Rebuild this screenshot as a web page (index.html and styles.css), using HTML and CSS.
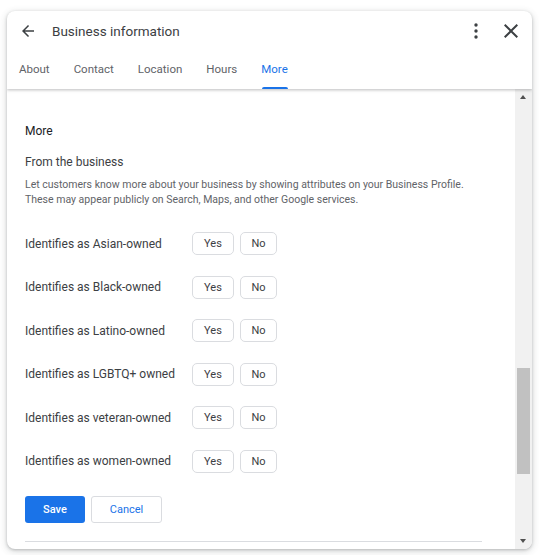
FILE: index.html
```html
<!DOCTYPE html>
<html>
<head>
<meta charset="utf-8">
<link rel="stylesheet" href="styles.css">
</head>
<body>
<div class="dialog">
  <div class="top">
    <div class="header">
      <svg class="ico back" width="24" height="24" viewBox="0 0 24 24"><path d="M20 11H7.83l5.59-5.59L12 4l-8 8 8 8 1.41-1.41L7.83 13H20v-2z" fill="#3c4043"/></svg>
      <div class="title">Business information</div>
      <svg class="ico kebab" width="24" height="24" viewBox="0 0 24 24"><circle cx="12" cy="6" r="1.7" fill="#3c4043"/><circle cx="12" cy="12" r="1.7" fill="#3c4043"/><circle cx="12" cy="18" r="1.7" fill="#3c4043"/></svg>
      <svg class="ico close" width="24" height="24" viewBox="0 0 24 24"><path d="M19 6.41L17.59 5 12 10.59 6.41 5 5 6.41 10.59 12 5 17.59 6.41 19 12 13.41 17.59 19 19 17.59 13.41 12z" fill="#3c4043"/></svg>
    </div>
    <div class="tabs">
      <div class="tab">About</div>
      <div class="tab">Contact</div>
      <div class="tab">Location</div>
      <div class="tab">Hours</div>
      <div class="tab active">More</div>
    </div>
  </div>
  <div class="body">
    <div class="content">
      <div class="h">More</div>
      <div class="sub">From the business</div>
      <div class="desc">Let customers know more about your business by showing attributes on your Business Profile. These may appear publicly on Search, Maps, and other Google services.</div>
      <div class="rows">
        <div class="row"><span class="label">Identifies as Asian-owned</span><button class="chip yes">Yes</button><button class="chip no">No</button></div>
        <div class="row"><span class="label">Identifies as Black-owned</span><button class="chip yes">Yes</button><button class="chip no">No</button></div>
        <div class="row"><span class="label">Identifies as Latino-owned</span><button class="chip yes">Yes</button><button class="chip no">No</button></div>
        <div class="row"><span class="label">Identifies as LGBTQ+ owned</span><button class="chip yes">Yes</button><button class="chip no">No</button></div>
        <div class="row"><span class="label">Identifies as veteran-owned</span><button class="chip yes">Yes</button><button class="chip no">No</button></div>
        <div class="row"><span class="label">Identifies as women-owned</span><button class="chip yes">Yes</button><button class="chip no">No</button></div>
      </div>
      <div class="actions">
        <button class="save">Save</button>
        <button class="cancel">Cancel</button>
      </div>
      <div class="rule"></div>
    </div>
    <div class="scrollbar">
      <div class="arrow up"></div>
      <div class="track"><div class="thumb"></div></div>
      <div class="arrow down"></div>
    </div>
  </div>
</div>
</body>
</html>
```
FILE: styles.css
```css
* { box-sizing: border-box; }
html, body { margin: 0; padding: 0; background: #fff; }
body {
  font-family: Roboto, "Liberation Sans", Arial, sans-serif;
  color: #3c4043;
  padding: 11px 7px 6px 7px;
}
.dialog {
  width: 525px;
  height: 538px;
  background: #fff;
  border-radius: 8px;
  box-shadow: 0 1px 3px rgba(60,64,67,0.3), 0 2px 6px 2px rgba(60,64,67,0.12);
  display: flex;
  flex-direction: column;
  overflow: hidden;
}
.top {
  position: relative;
  z-index: 1;
  box-shadow: 0 1px 3px rgba(60,64,67,0.35);
}
.header {
  height: 40px;
  display: flex;
  align-items: center;
  padding: 0 9px 0 12px;
}
.ico { display: block; flex: none; }
.back { margin-right: 15px; width: 18px; height: 18px; }
.title { flex: 1; font-size: 13.5px; color: #3c4043; }
.kebab { margin-right: 11px; }
.tabs {
  height: 38px;
  display: flex;
  align-items: stretch;
  gap: 24px;
  padding-left: 12px;
}
.tab {
  font-size: 11.5px;
  color: #5f6368;
  display: flex;
  align-items: center;
  padding-bottom: 2px;
  position: relative;
}
.tab.active { color: #1a73e8; }
.tab.active::after {
  content: "";
  position: absolute;
  left: 1px; right: 0; bottom: 0;
  height: 2px;
  background: #1a73e8;
  border-radius: 2px 2px 0 0;
}
.body { flex: 1; display: flex; min-height: 0; }
.content { flex: 1; padding: 35px 33px 0 18px; overflow: hidden; }
.h { font-size: 12px; color: #202124; font-weight: 400; line-height: 15px; }
.sub { font-size: 12px; color: #3c4043; margin-top: 15px; line-height: 16px; }
.desc { font-size: 10.5px; color: #5f6368; line-height: 15px; margin-top: 7px; }
.rows { margin-top: 15px; }
.row { display: flex; align-items: center; height: 43.5px; }
.label { width: 167px; font-size: 12px; color: #3c4043; }
.chip {
  font-family: inherit;
  background: #fff;
  border: 1px solid #dadce0;
  border-radius: 5px;
  height: 23px;
  font-size: 11px;
  color: #3c4043;
  padding: 0;
  margin: 0;
}
.chip.yes { width: 42px; margin-right: 6px; }
.chip.no { width: 37px; }
.actions { display: flex; gap: 6px; margin-top: 13px; }
.save {
  font-family: inherit;
  width: 60px; height: 27px;
  background: #1a73e8; color: #fff;
  border: none; border-radius: 3px;
  font-size: 11px; font-weight: 500;
}
.cancel {
  font-family: inherit;
  width: 71px; height: 27px;
  background: #fff; color: #1a73e8;
  border: 1px solid #dadce0; border-radius: 3px;
  font-size: 11px;
}
.rule { height: 1px; background: #dadce0; margin-top: 18px; }
.scrollbar {
  width: 17px;
  background: #f1f1f1;
  display: flex;
  flex-direction: column;
  align-items: center;
}
.arrow { width: 17px; height: 17px; position: relative; flex: none; }
.arrow.up::before, .arrow.down::before {
  content: "";
  position: absolute;
  left: 5px;
  border-left: 3.5px solid transparent;
  border-right: 3.5px solid transparent;
}
.arrow.up::before { top: 6px; border-bottom: 4px solid #505050; }
.arrow.down::before { top: 7px; border-top: 4px solid #505050; }
.track { flex: 1; width: 100%; display: flex; flex-direction: column; justify-content: flex-end; padding: 0 2px 58px 2px; }
.thumb { height: 106px; background: #c1c1c1; }
```
